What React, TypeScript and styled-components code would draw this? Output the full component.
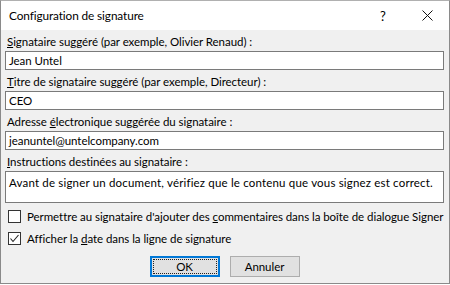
import styled, { createGlobalStyle } from "styled-components";

const GlobalStyle = createGlobalStyle`
  body {
    margin: 0;
    background: #ffffff;
    font-family: Lato, "Noto Sans", sans-serif;
    font-size: 11.5px;
    letter-spacing: -0.05px;
    color: #000;
  }
`;

const Window = styled.div`
  width: 450px;
  height: 284px;
  box-sizing: border-box;
  border: 1px solid #8a8a8a;
  border-top-color: #b0b0b0;
  display: flex;
  flex-direction: column;
  background: #f0f0f0;
`;

const TitleBar = styled.div`
  height: 29px;
  flex-shrink: 0;
  display: flex;
  align-items: center;
  background: #ffffff;
  padding-left: 8px;
`;

const Title = styled.div`
  flex: 1;
  font-size: 11.8px;
  letter-spacing: -0.1px;
`;

const CaptionButton = styled.div`
  width: 44px;
  height: 29px;
  display: flex;
  align-items: center;
  justify-content: center;
  font-size: 13px;
  color: #000;
`;

const Body = styled.div`
  flex: 1;
  display: flex;
  flex-direction: column;
  padding: 4px 5px 0 4px;
`;

const Field = styled.div<{ $last?: boolean }>`
  display: flex;
  flex-direction: column;
  margin-bottom: ${({ $last }) => ($last ? "2px" : "4px")};
`;

const Label = styled.div`
  padding-left: 2px;
  height: 17px;
  line-height: 16px;
  white-space: nowrap;
`;

const TextBox = styled.div<{ $tall?: boolean }>`
  height: ${({ $tall }) => ($tall ? "32px" : "19px")};
  box-sizing: border-box;
  border: 1px solid #7a7a7a;
  background: #ffffff;
  padding: ${({ $tall }) => ($tall ? "2px 3px 0" : "0 3px")};
  line-height: 17px;
  white-space: nowrap;
  overflow: hidden;
`;

const TallText = styled.span`
  letter-spacing: 0.18px;
`;

const CheckRow = styled.div`
  display: flex;
  align-items: center;
  height: 22px;
  padding-left: 3px;
  gap: 6px;
  white-space: nowrap;
`;

const Box = styled.div`
  width: 13px;
  height: 13px;
  flex-shrink: 0;
  box-sizing: border-box;
  border: 1px solid #333333;
  background: #ffffff;
  display: flex;
  align-items: center;
  justify-content: center;
`;

const ButtonRow = styled.div`
  display: flex;
  justify-content: center;
  gap: 10px;
  margin-top: 7px;
`;

const Button = styled.div<{ $focused?: boolean }>`
  width: 70px;
  height: 21px;
  box-sizing: border-box;
  background: #e1e1e1;
  border: ${({ $focused }) => ($focused ? "2px solid #0078d7" : "1px solid #adadad")};
  display: flex;
  align-items: center;
  justify-content: center;
  padding: ${({ $focused }) => ($focused ? "1px" : "0")};
`;

const FocusRect = styled.div`
  flex: 1;
  align-self: stretch;
  border: 1px dotted #222;
  display: flex;
  align-items: center;
  justify-content: center;
`;

const Check = ({ checked }: { checked?: boolean }) => (
  <Box>
    {checked && (
      <svg width="11" height="11" viewBox="0 0 11 11">
        <polyline points="1.5,5.5 4,8.5 9.5,2" fill="none" stroke="#222" strokeWidth="1.1" />
      </svg>
    )}
  </Box>
);

export default function App() {
  return (
    <>
      <GlobalStyle />
      <Window>
        <TitleBar>
          <Title>Configuration de signature</Title>
          <CaptionButton>?</CaptionButton>
          <CaptionButton>
            <svg width="11" height="11" viewBox="0 0 11 11">
              <path d="M0.5 0.5 L10.5 10.5 M10.5 0.5 L0.5 10.5" stroke="#111" strokeWidth="1" />
            </svg>
          </CaptionButton>
        </TitleBar>
        <Body>
          <Field>
            <Label>
              <u>S</u>ignataire suggéré (par exemple, Olivier Renaud) :
            </Label>
            <TextBox>Jean Untel</TextBox>
          </Field>
          <Field>
            <Label>
              <u>T</u>itre de signataire suggéré (par exemple, Directeur) :
            </Label>
            <TextBox>CEO</TextBox>
          </Field>
          <Field>
            <Label>
              Adresse <u>é</u>lectronique suggérée du signataire :
            </Label>
            <TextBox>jeanuntel@untelcompany.com</TextBox>
          </Field>
          <Field $last>
            <Label>
              <u>I</u>nstructions destinées au signataire :
            </Label>
            <TextBox $tall>
              <TallText>
                Avant de signer un document, vérifiez que le contenu que vous signez est correct.
              </TallText>
            </TextBox>
          </Field>
          <CheckRow>
            <Check />
            <span>
              Permettre au signataire d'ajouter des <u>c</u>ommentaires dans la boîte de dialogue Signer
            </span>
          </CheckRow>
          <CheckRow>
            <Check checked />
            <span>
              Afficher la <u>d</u>ate dans la ligne de signature
            </span>
          </CheckRow>
          <ButtonRow>
            <Button $focused>
              <FocusRect>OK</FocusRect>
            </Button>
            <Button>Annuler</Button>
          </ButtonRow>
        </Body>
      </Window>
    </>
  );
}
